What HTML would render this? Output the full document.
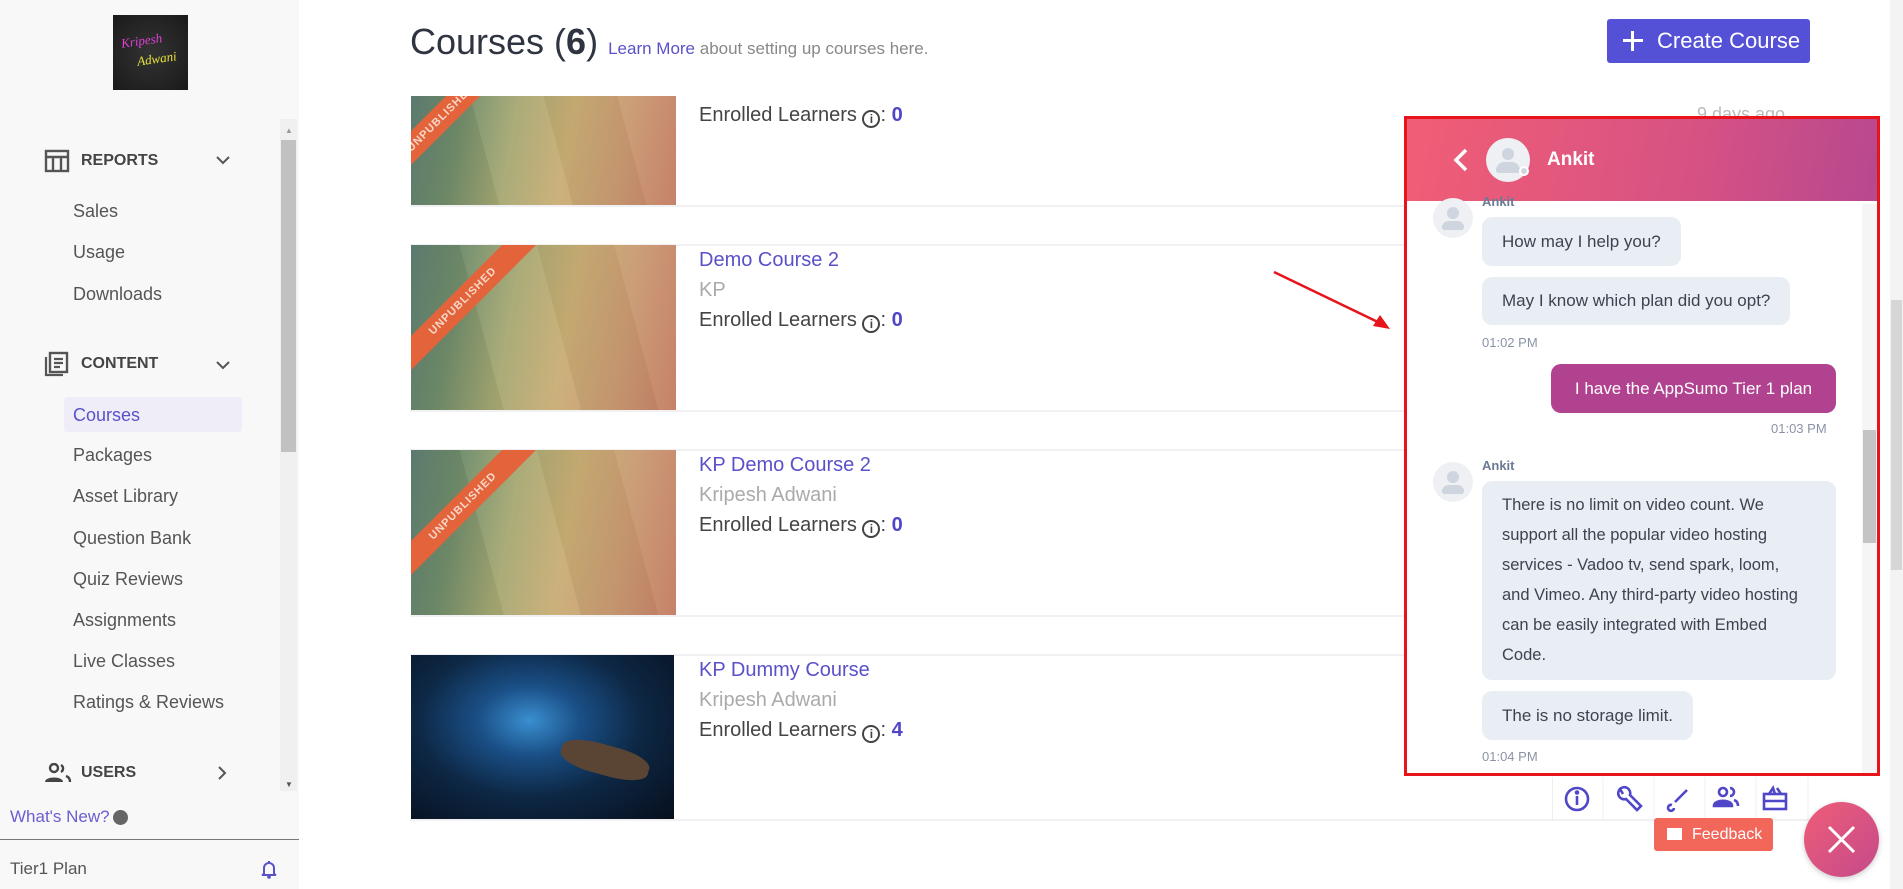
<!DOCTYPE html>
<html><head><meta charset="utf-8"><style>
*{box-sizing:border-box;margin:0;padding:0}
body{width:1903px;height:889px;overflow:hidden;background:#fff;font-family:"Liberation Sans",sans-serif;position:relative}
.a{position:absolute}
#sb{left:0;top:0;width:299px;height:889px;background:#f8f8f9}
.it{position:absolute;left:73px;font-size:18px;color:#555;line-height:20px}
.hd{position:absolute;left:81px;font-size:16px;font-weight:bold;color:#444;line-height:20px}
.row-line{position:absolute;left:410px;width:1400px;height:2px;background:#f1f1f3}
.img{position:absolute;left:411px;width:265px;overflow:hidden;background:linear-gradient(100deg,#5f7f72 0%,#6f8c6a 18%,#a6a872 38%,#c9ad74 58%,#c99a72 78%,#c47c63 100%)}
.img:before{content:"";position:absolute;inset:0;background:linear-gradient(75deg,rgba(0,0,0,.04) 0 30%,rgba(255,255,255,.05) 30% 55%,rgba(0,0,0,.03) 55% 80%,rgba(255,255,255,.04) 80%)}
.rib{position:absolute;left:-48px;top:44px;width:200px;height:24px;background:#e3633b;color:#f6d8c8;font-size:11px;font-weight:bold;text-align:center;line-height:24px;transform:rotate(-45deg);letter-spacing:1px}
.t{position:absolute;left:699px;font-size:20px;color:#5a51c9;line-height:24px}
.s{position:absolute;left:699px;font-size:20px;color:#aaa;line-height:24px}
.e{position:absolute;left:699px;font-size:20px;color:#444;line-height:24px}
.e b{color:#4f46c8}
.ic{display:inline-block;width:18px;height:18px;border:2px solid #444;border-radius:50%;font-size:12px;text-align:center;line-height:14px;font-weight:bold;vertical-align:-2px}
.bub{position:absolute;left:1482px;background:#e9edf4;border-radius:10px;color:#3d4450;font-size:17px;padding:0 20px;white-space:nowrap}
.tm{position:absolute;font-size:13px;color:#8a93a6}
.av{position:absolute;width:40px;height:40px;border-radius:50%;background:#eef0f4}
.av:before{content:"";position:absolute;left:14px;top:9px;width:12px;height:12px;border-radius:50%;background:#cfd5de}
.av:after{content:"";position:absolute;left:9px;top:23px;width:22px;height:9px;border-radius:10px 10px 4px 4px;background:#cfd5de}
</style></head><body>
<div id="sb" class="a">
 <div class="a" style="left:113px;top:15px;width:75px;height:75px;background:#222 radial-gradient(#333,#1a1a1a);">
  <div class="a" style="left:8px;top:18px;font:italic 13px 'Liberation Serif',serif;color:#e040d8;transform:rotate(-8deg)">Kripesh</div>
  <div class="a" style="left:24px;top:36px;font:italic 13px 'Liberation Serif',serif;color:#e8e23a;transform:rotate(-8deg)">Adwani</div>
 </div>
 <div class="a" style="left:280px;top:119px;width:17px;height:672px;background:#f0f0f0"></div>
 <div class="a" style="left:281px;top:140px;width:15px;height:312px;background:#c1c1c1"></div>
 <div class="a" style="left:285px;top:126px;font-size:8px;color:#999">▲</div>
 <div class="a" style="left:285px;top:780px;font-size:8px;color:#555">▼</div>
 <svg class="a" style="left:44px;top:149px" width="26" height="24" viewBox="0 0 26 24"><rect x="2" y="2" width="22" height="20" fill="none" stroke="#555" stroke-width="2.4"/><path d="M2 8H24M9 8V22M17 8V22" stroke="#555" stroke-width="2.4"/></svg>
 <div class="hd" style="top:151px">REPORTS</div>
 <svg class="a" style="left:215px;top:155px" width="16" height="10"><path d="M2 2L8 8L14 2" fill="none" stroke="#555" stroke-width="2"/></svg>
 <div class="it" style="top:201px">Sales</div>
 <div class="it" style="top:242px">Usage</div>
 <div class="it" style="top:284px">Downloads</div>
 <svg class="a" style="left:43px;top:351px" width="26" height="26" viewBox="0 0 26 26"><rect x="7" y="2" width="17" height="19" fill="none" stroke="#555" stroke-width="2.4"/><path d="M3 6V24H20M11 8H20M11 12H20M11 16H17" stroke="#555" stroke-width="2.2" fill="none"/></svg>
 <div class="hd" style="top:354px">CONTENT</div>
 <svg class="a" style="left:215px;top:360px" width="16" height="10"><path d="M2 2L8 8L14 2" fill="none" stroke="#555" stroke-width="2"/></svg>
 <div class="a" style="left:64px;top:397px;width:178px;height:35px;background:#efeef8;border-radius:3px"></div>
 <div class="it" style="top:405px;color:#5a51c9">Courses</div>
 <div class="it" style="top:445px">Packages</div>
 <div class="it" style="top:486px">Asset Library</div>
 <div class="it" style="top:528px">Question Bank</div>
 <div class="it" style="top:569px">Quiz Reviews</div>
 <div class="it" style="top:610px">Assignments</div>
 <div class="it" style="top:651px">Live Classes</div>
 <div class="it" style="top:692px">Ratings &amp; Reviews</div>
 <svg class="a" style="left:44px;top:763px" width="28" height="20" viewBox="0 0 28 20"><circle cx="10" cy="5" r="4" fill="none" stroke="#444" stroke-width="2.4"/><path d="M1 19C1 13 19 13 19 19Z" fill="#444"/><path d="M17 2A4 4 0 0 1 17 9M22 13C25 14 26 16 26 19" stroke="#444" stroke-width="2.4" fill="none"/></svg>
 <div class="hd" style="top:763px">USERS</div>
 <svg class="a" style="left:217px;top:765px" width="10" height="16"><path d="M2 2L8 8L2 14" fill="none" stroke="#555" stroke-width="2"/></svg>
 <div class="a" style="left:10px;top:807px;font-size:17px;color:#6a5ed0">What's New?</div>
 <div class="a" style="left:113px;top:810px;width:15px;height:15px;border-radius:50%;background:#666"></div>
 <div class="a" style="left:0;top:839px;width:299px;height:1px;background:#777"></div>
 <div class="a" style="left:10px;top:859px;font-size:17px;color:#555">Tier1 Plan</div>
 <svg class="a" style="left:261px;top:859px" width="16" height="20" viewBox="0 0 16 20"><path d="M3 15V9A5 5 0 0 1 13 9V15L15 16H1Z" fill="none" stroke="#5a51c9" stroke-width="2"/><circle cx="8" cy="18" r="1.8" fill="#5a51c9"/><rect x="7" y="2" width="2" height="3" fill="#5a51c9"/></svg>
</div>

<div class="a" style="left:410px;top:20px;font-size:36px;color:#2e3440;line-height:44px">Courses (<b>6</b>) <span style="font-size:17px;color:#5a51c9">Learn More</span><span style="font-size:17px;color:#888"> about setting up courses here.</span></div>
<div class="a" style="left:1607px;top:19px;width:203px;height:44px;background:#5451d6;border-radius:3px;color:#fff;font-size:22px;line-height:44px;padding-left:50px">Create Course</div>
<div class="a" style="left:1623px;top:39px;width:20px;height:3px;background:#fff"></div>
<div class="a" style="left:1631px;top:31px;width:3px;height:20px;background:#fff"></div>

<div class="img" style="top:96px;height:109px"><div class="rib" style="top:10px;left:-70px">UNPUBLISHED</div></div>
<div class="e" style="top:103px">Enrolled Learners <span class="ic">i</span>: <b>0</b></div>
<div class="a" style="left:1697px;top:104px;font-size:18px;color:#bbb">9 days ago</div>
<div class="row-line" style="top:205px"></div>

<div class="row-line" style="top:244px"></div>
<div class="img" style="top:245px;height:165px"><div class="rib">UNPUBLISHED</div></div>
<div class="t" style="top:248px">Demo Course 2</div>
<div class="s" style="top:278px">KP</div>
<div class="e" style="top:308px">Enrolled Learners <span class="ic">i</span>: <b>0</b></div>
<div class="row-line" style="top:410px"></div>

<div class="row-line" style="top:449px"></div>
<div class="img" style="top:450px;height:165px"><div class="rib">UNPUBLISHED</div></div>
<div class="t" style="top:453px">KP Demo Course 2</div>
<div class="s" style="top:483px">Kripesh Adwani</div>
<div class="e" style="top:513px">Enrolled Learners <span class="ic">i</span>: <b>0</b></div>
<div class="row-line" style="top:615px"></div>

<div class="row-line" style="top:654px"></div>
<div class="a" style="left:411px;top:655px;width:263px;height:164px;background:radial-gradient(ellipse at 45% 40%,#3a8fd0 0%,#1a4f86 25%,#0d2744 55%,#070f1c 100%)"></div>
<div class="a" style="left:560px;top:745px;width:90px;height:30px;border-radius:40%;background:#5a4535;transform:rotate(15deg)"></div>
<div class="t" style="top:658px">KP Dummy Course</div>
<div class="s" style="top:688px">Kripesh Adwani</div>
<div class="e" style="top:718px">Enrolled Learners <span class="ic">i</span>: <b>4</b></div>
<div class="row-line" style="top:819px"></div>
<div class="a" style="left:1552px;top:777px;width:257px;height:43px;border-left:1px solid #eee"></div>
<svg class="a" style="left:1552px;top:777px" width="257" height="43" viewBox="0 0 257 43">
<g stroke="#4f46c8" stroke-width="2.6" fill="none">
<circle cx="25" cy="22" r="11"/><path d="M25 19V28"/><circle cx="25" cy="15.5" r="1" fill="#4f46c8"/>
<path d="M68 12A6 6 0 0 0 74 22L85 33L89 29L78 18A6 6 0 0 0 68 12L71 17Z"/>
<path d="M135 13L123 25M120 28A3 3 0 1 0 122 31"/>
<circle cx="171" cy="15" r="4"/><path d="M162 29C162 22 180 22 180 29Z" fill="#4f46c8"/><path d="M178 11A4 4 0 0 1 178 19M182 23C185 24 186 26 186 29"/>
<rect x="212" y="17" width="22" height="15"/><path d="M212 24H234M217 17L221 11L223 17M229 17L225 11"/></g>
<g stroke="#f0f0f2" stroke-width="1"><path d="M51 0V43M102 0V43M153 0V43M204 0V43M256 0V43"/></g></svg>
<div class="a" style="left:1654px;top:818px;width:119px;height:33px;background:#f2675a;border-radius:3px;color:#fff;font-size:16px;line-height:33px;padding-left:38px">Feedback</div>
<div class="a" style="left:1667px;top:828px;width:15px;height:12px;background:#fff"></div>
<div class="a" style="left:1804px;top:802px;width:75px;height:75px;border-radius:50%;background:linear-gradient(135deg,#ef5d78,#c44a8a);box-shadow:0 2px 6px rgba(0,0,0,.2)"></div>
<svg class="a" style="left:1826px;top:824px" width="31" height="31"><path d="M3 3L28 28M28 3L3 28" stroke="#fff" stroke-width="3"/></svg>
<div class="a" style="left:1890px;top:0;width:13px;height:889px;background:#f3f3f3"></div>
<div class="a" style="left:1891px;top:300px;width:11px;height:270px;background:#d6d6d6"></div>

<svg class="a" style="left:1270px;top:268px" width="130" height="70"><path d="M4 4L112 56" stroke="#e8141c" stroke-width="2.5"/><path d="M120 61L103 58L110 47Z" fill="#e8141c"/></svg>

<div class="a" style="left:1404px;top:116px;width:476px;height:660px;border:3px solid #e8141c;background:#fff;overflow:hidden">
 <div class="a" style="left:0;top:0;width:470px;height:82px;background:linear-gradient(100deg,#f15e75,#d75283 60%,#b7488f)"></div>
 <svg class="a" style="left:44px;top:28px" width="20" height="26"><path d="M15 3L5 13L15 23" stroke="#fff" stroke-width="3.5" fill="none"/></svg>
 <div class="a" style="left:79px;top:19px;width:44px;height:44px;border-radius:50%;background:#eef0f4"></div>
 <div class="a" style="left:95px;top:29px;width:12px;height:12px;border-radius:50%;background:#cfd5de"></div>
 <div class="a" style="left:89px;top:43px;width:24px;height:11px;border-radius:10px 10px 3px 3px;background:#cfd5de"></div>
 <div class="a" style="left:112px;top:47px;width:10px;height:10px;border-radius:50%;background:#cfd5de;border:2px solid #fff"></div>
 <div class="a" style="left:140px;top:30px;font-size:19px;color:#fff;font-weight:bold">Ankit</div>
 <div class="a" style="left:455px;top:85px;width:15px;height:572px;background:#f5f5f5"></div>
 <div class="a" style="left:456px;top:311px;width:13px;height:113px;background:#c4c4c4"></div>
</div>
<div class="av" style="left:1433px;top:198px"></div>
<div class="a" style="left:1482px;top:194px;font-size:13px;color:#6b7a94;font-weight:bold">Ankit</div>
<div class="bub" style="top:217px;height:49px;line-height:49px">How may I help you?</div>
<div class="bub" style="top:277px;height:48px;line-height:48px">May I know which plan did you opt?</div>
<div class="tm" style="left:1482px;top:335px">01:02 PM</div>
<div class="a" style="left:1551px;top:364px;width:285px;height:49px;background:#b0428f;border-radius:10px;color:#fff;font-size:17px;line-height:49px;text-align:center">I have the AppSumo Tier 1 plan</div>
<div class="tm" style="left:1771px;top:421px">01:03 PM</div>
<div class="av" style="left:1433px;top:462px"></div>
<div class="a" style="left:1482px;top:458px;font-size:13px;color:#6b7a94;font-weight:bold">Ankit</div>
<div class="bub" style="top:481px;width:354px;height:199px;line-height:30px;padding-top:9px;font-size:16.5px">There is no limit on video count. We<br>support all the popular video hosting<br>services - Vadoo tv, send spark, loom,<br>and Vimeo. Any third-party video hosting<br>can be easily integrated with Embed<br>Code.</div>
<div class="bub" style="top:691px;height:49px;line-height:49px">The is no storage limit.</div>
<div class="tm" style="left:1482px;top:749px">01:04 PM</div>
</body></html>
